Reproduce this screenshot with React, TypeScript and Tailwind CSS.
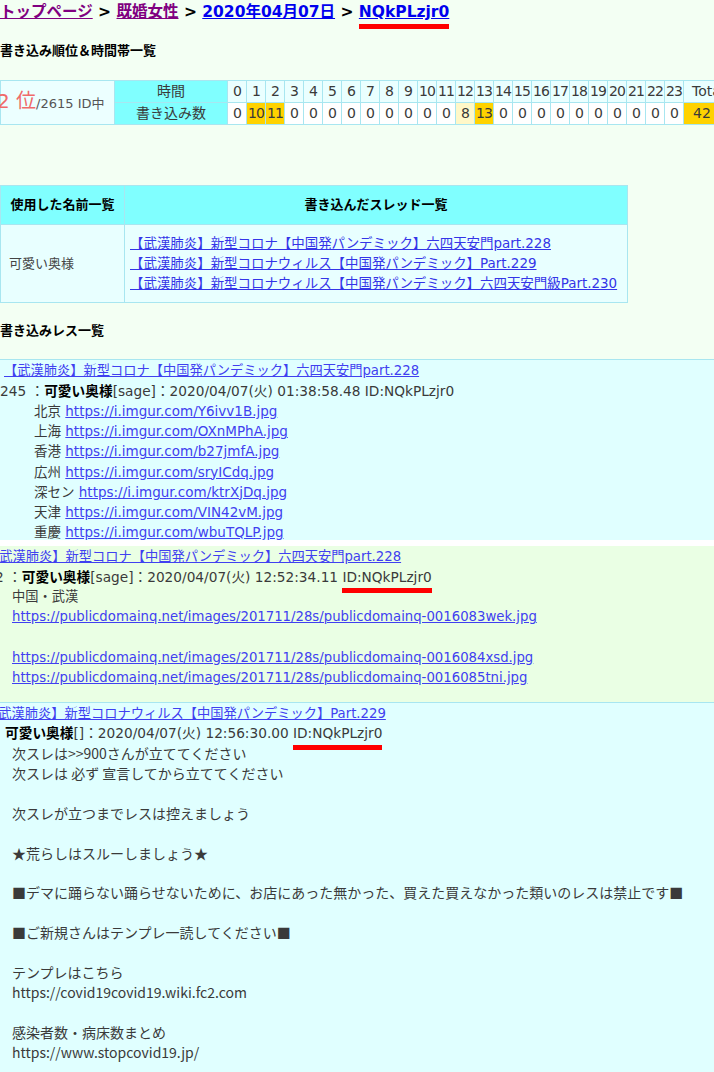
import React from 'react';

const hours = Array.from({ length: 24 }, (_, i) => i);
const counts: Record<number, number> = { 1: 10, 2: 11, 12: 8, 13: 13 };

const threads = [
  '【武漢肺炎】新型コロナ【中国発パンデミック】六四天安門part.228',
  '【武漢肺炎】新型コロナウィルス【中国発パンデミック】Part.229',
  '【武漢肺炎】新型コロナウィルス【中国発パンデミック】六四天安門級Part.230',
];

const cityLinks = [
  ['北京', 'https://i.imgur.com/Y6ivv1B.jpg'],
  ['上海', 'https://i.imgur.com/OXnMPhA.jpg'],
  ['香港', 'https://i.imgur.com/b27jmfA.jpg'],
  ['広州', 'https://i.imgur.com/sryICdq.jpg'],
  ['深セン', 'https://i.imgur.com/ktrXjDq.jpg'],
  ['天津', 'https://i.imgur.com/VIN42vM.jpg'],
  ['重慶', 'https://i.imgur.com/wbuTQLP.jpg'],
];

// latin in a Verdana-like face, kana/kanji from Noto
const wide = "font-['DejaVu_Sans','Noto_Sans_CJK_JP',sans-serif]";

const RedBar = () => (
  <span className="absolute left-0 right-0 -bottom-[6px] h-[5px] bg-[#ff0000]" />
);

function cellBg(n: number) {
  if (n >= 10) return 'bg-[#ffd200]';
  if (n > 0) return 'bg-[#fff8c8]';
  return 'bg-white';
}

const App: React.FC = () => {
  return (
    <div className="w-[714px] min-h-[1072px] overflow-hidden bg-[#f3fff3] text-[#3a3a3a] font-['Noto_Sans_CJK_JP',sans-serif] text-[14px]">
      {/* breadcrumb */}
      <div className={`h-[30px] pt-[1px] text-[15.5px] font-bold leading-[22px] text-black whitespace-nowrap ${wide}`}>
        <a className="text-[#800080] underline">トップページ</a>
        {' > '}
        <a className="text-[#800080] underline">既婚女性</a>
        {' > '}
        <a className="text-[#0000ee] underline">2020年04月07日</a>
        {' > '}
        <span className="relative inline-block">
          <a className="text-[#0000ee] underline">NQkPLzjr0</a>
          <RedBar />
        </span>
      </div>

      <div className="h-[50px] pt-[10px] text-[13px] font-bold leading-[20px] text-black">
        書き込み順位＆時間帯一覧
      </div>

      {/* hourly post table */}
      <table className={`table-fixed border-collapse text-[14px] leading-[21px] w-[731px] ${wide}`}>
        <tbody>
          <tr>
            <td
              rowSpan={2}
              className="w-[114px] border border-[#a8e6f0] bg-[#ecffff] whitespace-nowrap p-0"
            >
              <span className="-ml-[4px] text-[20px] text-[#f06a6a]">2 位</span>
              <span className="text-[13px] text-[#555]">/2615 ID中</span>
            </td>
            <td className="w-[113px] border border-[#a8e6f0] bg-[#80ffff] text-center p-0">時間</td>
            {hours.map((h) => (
              <td key={h} className="w-[19px] border border-[#a8e6f0] bg-[#eaffff] text-center p-0 tracking-[-1px]">
                {h}
              </td>
            ))}
            <td className="w-[48px] border border-[#a8e6f0] bg-[#eaffff] p-0 pl-[8px] whitespace-nowrap">Total</td>
          </tr>
          <tr>
            <td className="border border-[#a8e6f0] bg-[#80ffff] text-center p-0">書き込み数</td>
            {hours.map((h) => {
              const n = counts[h] ?? 0;
              return (
                <td key={h} className={`border border-[#a8e6f0] text-center p-0 tracking-[-1px] ${cellBg(n)}`}>
                  {n}
                </td>
              );
            })}
            <td className="border border-[#a8e6f0] bg-[#ffd200] p-0 pl-[9px]">42</td>
          </tr>
        </tbody>
      </table>

      {/* names / threads */}
      <table className={`mt-[60px] w-[628px] table-fixed border-collapse text-[13px] ${wide}`}>
        <tbody>
          <tr className="h-[39px] bg-[#80ffff]">
            <th className="w-[124px] border border-[#a8e6f0] font-bold text-black">使用した名前一覧</th>
            <th className="border border-[#a8e6f0] font-bold text-black">書き込んだスレッド一覧</th>
          </tr>
          <tr className="h-[78px] bg-[#e8ffff]">
            <td className="border border-[#a8e6f0] pl-[8px] text-[#444]">可愛い奥様</td>
            <td className="border border-[#a8e6f0] pl-[5px] leading-[20px] whitespace-nowrap text-[13.45px]">
              {threads.map((t) => (
                <div key={t}>
                  <a className="text-[#3434e8] underline">{t}</a>
                </div>
              ))}
            </td>
          </tr>
        </tbody>
      </table>

      <div className="h-[56px] pt-[17px] text-[13px] font-bold leading-[20px] text-black">
        書き込みレス一覧
      </div>

      {/* post 245 */}
      <div className={`h-[181px] overflow-hidden border-t border-[#a8e6f0] bg-[#e0ffff] pt-[1px] leading-[20.3px] text-[13.5px] ${wide}`}>
        <div className="h-[20px] pl-[4px] text-[13.25px] whitespace-nowrap">
          <a className="text-[#4040f0] underline">【武漢肺炎】新型コロナ【中国発パンデミック】六四天安門part.228</a>
        </div>
        <div className="h-[20px] whitespace-nowrap text-[13.7px]">
          245 ：<b className="text-black">可愛い奥様</b>[sage]：2020/04/07(火) 01:38:58.48 ID:NQkPLzjr0
        </div>
        <div className="pl-[34px]">
          {cityLinks.map(([city, url]) => (
            <div key={url} className="h-[20.2px]">
              {city} <a className="text-[#4040f0] underline">{url}</a>
            </div>
          ))}
        </div>
      </div>

      <div className="h-[6px] bg-white" />

      {/* post 2 */}
      <div className={`h-[156px] overflow-hidden bg-[#eaffe4] pt-[1px] leading-[20.3px] text-[13.25px] ${wide}`}>
        <div className="h-[20px] -ml-[14px] text-[13.25px] whitespace-nowrap">
          <a className="text-[#4040f0] underline">【武漢肺炎】新型コロナ【中国発パンデミック】六四天安門part.228</a>
        </div>
        <div className="h-[20px] -ml-[5px] whitespace-nowrap text-[13.7px]">
          2 ：<b className="text-black">可愛い奥様</b>[sage]：2020/04/07(火) 12:52:34.11{' '}
          <span className="relative inline-block">
            ID:NQkPLzjr0
            <RedBar />
          </span>
        </div>
        <div className="pl-[12px] whitespace-nowrap">
          <div>中国・武漢</div>
          <div>
            <a className="text-[#4040f0] underline">https://publicdomainq.net/images/201711/28s/publicdomainq-0016083wek.jpg</a>
          </div>
          <div>&nbsp;</div>
          <div>
            <a className="text-[#4040f0] underline">https://publicdomainq.net/images/201711/28s/publicdomainq-0016084xsd.jpg</a>
          </div>
          <div>
            <a className="text-[#4040f0] underline">https://publicdomainq.net/images/201711/28s/publicdomainq-0016085tni.jpg</a>
          </div>
        </div>
      </div>

      {/* post part.229 */}
      <div className="border-t border-[#a8e6f0] bg-[#e0ffff] pt-[1px] pb-[10px] leading-[19.9px]">
        <div className={`h-[20px] -ml-[15px] text-[13.25px] whitespace-nowrap ${wide}`}>
          <a className="text-[#4040f0] underline">【武漢肺炎】新型コロナウィルス【中国発パンデミック】Part.229</a>
        </div>
        <div className={`h-[20px] pl-[5px] whitespace-nowrap text-[13.7px] ${wide}`}>
          <b className="text-black">可愛い奥様</b>[]：2020/04/07(火) 12:56:30.00{' '}
          <span className="relative inline-block">
            ID:NQkPLzjr0
            <RedBar />
          </span>
        </div>
        <div className="pl-[12px]">
          <div>次スレは&gt;&gt;900さんが立ててください</div>
          <div>次スレは 必ず 宣言してから立ててください</div>
          <div>&nbsp;</div>
          <div>次スレが立つまでレスは控えましょう</div>
          <div>&nbsp;</div>
          <div>★荒らしはスルーしましょう★</div>
          <div>&nbsp;</div>
          <div>■デマに踊らない踊らせないために、お店にあった無かった、買えた買えなかった類いのレスは禁止です■</div>
          <div>&nbsp;</div>
          <div>■ご新規さんはテンプレ一読してください■</div>
          <div>&nbsp;</div>
          <div>テンプレはこちら</div>
          <div>https://covid19covid19.wiki.fc2.com</div>
          <div>&nbsp;</div>
          <div>感染者数・病床数まとめ</div>
          <div>https://www.stopcovid19.jp/</div>
        </div>
      </div>
    </div>
  );
};

export default App;
